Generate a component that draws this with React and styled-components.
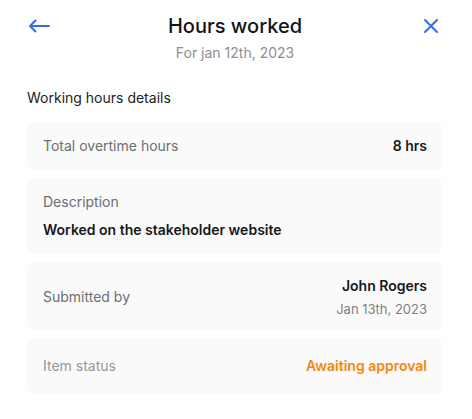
import React from "react";
import styled, { createGlobalStyle } from "styled-components";

const Global = createGlobalStyle`
  html, body { margin: 0; padding: 0; background: #ffffff; }
  body { font-family: Inter, "Noto Sans", sans-serif; -webkit-font-smoothing: antialiased; }
  * { box-sizing: border-box; }
`;

const Page = styled.div`
  width: 472px;
  padding: 12px 29px 24px 27px;
  display: flex;
  flex-direction: column;
`;

const Header = styled.header`
  display: grid;
  grid-template-columns: 24px 1fr 24px;
  align-items: start;
`;

const IconButton = styled.button`
  width: 24px;
  height: 24px;
  margin-top: 2px;
  padding: 0;
  border: 0;
  background: none;
  display: flex;
  align-items: center;
  justify-content: center;
  color: #2f6fec;
  cursor: pointer;
`;

const TitleBlock = styled.div`
  display: flex;
  flex-direction: column;
  align-items: center;
`;

const Title = styled.h1`
  margin: 0;
  font-size: 20px;
  line-height: 28px;
  font-weight: 500;
  color: #121417;
`;

const Subtitle = styled.div`
  margin-top: 3px;
  font-size: 14px;
  line-height: 20px;
  color: #8d8f93;
`;

const SectionTitle = styled.h2`
  margin: 25px 0 14px;
  font-size: 14px;
  line-height: 20px;
  font-weight: 400;
  color: #1b1d20;
`;

const Cards = styled.div`
  display: flex;
  flex-direction: column;
  gap: 8px;
`;

const Card = styled.div`
  background: #fafafa;
  border-radius: 8px;
  padding: ${(p) => p.$pad || "14px 16px"};
  display: flex;
  flex-direction: ${(p) => (p.$stack ? "column" : "row")};
  justify-content: space-between;
  align-items: ${(p) => (p.$stack ? "flex-start" : "center")};
  gap: ${(p) => (p.$stack ? "8px" : "12px")};
`;

const Label = styled.span`
  font-size: 14px;
  line-height: 20px;
  color: ${(p) => (p.$light ? "#96989c" : "#6c6e72")};
`;

const Value = styled.span`
  font-size: 14px;
  line-height: 20px;
  font-weight: 600;
  color: ${(p) => p.$color || "#16181b"};
`;

const ValueStack = styled.div`
  display: flex;
  flex-direction: column;
  align-items: flex-end;
  gap: 4px;
`;

const SubValue = styled.span`
  font-size: 13px;
  line-height: 18px;
  color: #7d7f83;
`;

const ArrowIcon = () => (
  <svg width="22" height="14" viewBox="0 0 22 14" fill="none" stroke="currentColor" strokeWidth="2" strokeLinecap="round" strokeLinejoin="round">
    <path d="M21 7H2M7.5 1.5L2 7l5.5 5.5" />
  </svg>
);

const CloseIcon = () => (
  <svg width="16" height="16" viewBox="0 0 16 16" fill="none" stroke="currentColor" strokeWidth="2" strokeLinecap="round">
    <path d="M2 2l12 12M14 2L2 14" />
  </svg>
);

export default function App() {
  return (
    <>
      <Global />
      <Page>
        <Header>
          <IconButton aria-label="Back"><ArrowIcon /></IconButton>
          <TitleBlock>
            <Title>Hours worked</Title>
            <Subtitle>For jan 12th, 2023</Subtitle>
          </TitleBlock>
          <IconButton aria-label="Close"><CloseIcon /></IconButton>
        </Header>
        <SectionTitle>Working hours details</SectionTitle>
        <Cards>
          <Card>
            <Label>Total overtime hours</Label>
            <Value>8 hrs</Value>
          </Card>
          <Card $stack $pad="14px 16px">
            <Label>Description</Label>
            <Value>Worked on the stakeholder website</Value>
          </Card>
          <Card $pad="14px 16px 12px">
            <Label>Submitted by</Label>
            <ValueStack>
              <Value>John Rogers</Value>
              <SubValue>Jan 13th, 2023</SubValue>
            </ValueStack>
          </Card>
          <Card $pad="18px 16px">
            <Label $light>Item status</Label>
            <Value $color="#f7860e">Awaiting approval</Value>
          </Card>
        </Cards>
      </Page>
    </>
  );
}
